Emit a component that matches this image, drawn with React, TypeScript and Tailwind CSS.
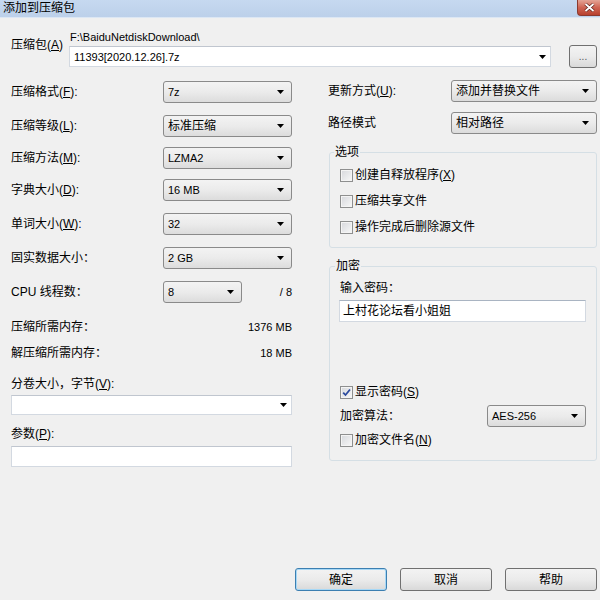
import React from 'react';

const Arrow = () => (
  <svg width="7" height="4" viewBox="0 0 7 4" className="shrink-0">
    <path d="M0 0h7L3.5 4z" fill="#000" />
  </svg>
);

function Select({ value, className = '', latin }: { value: string; className?: string; latin?: boolean }) {
  return (
    <div
      className={`h-[22px] flex items-center justify-between pl-[4px] pr-[7px] rounded-[3px] border border-[#8a8a8a] bg-gradient-to-b from-[#f3f3f3] via-[#ebebeb] to-[#dcdcdc] leading-[14px] ${className}`}
    >
      <span className={latin ? 'text-[11px]' : ''}>{value}</span>
      <Arrow />
    </div>
  );
}

function Key({ k }: { k: string }) {
  return (
    <>
      (<span className="underline underline-offset-1">{k}</span>)
    </>
  );
}

function Check({ checked = false }: { checked?: boolean }) {
  return (
    <div className="w-[13px] h-[13px] shrink-0 border border-[#8e8f8f] bg-gradient-to-br from-[#d6d8dc] to-[#f8f8f8] shadow-[inset_0_0_0_1px_#f4f4f4] flex items-center justify-center">
      {checked && (
        <svg width="9" height="9" viewBox="0 0 9 9">
          <path d="M1.2 4.6 L3.5 7 L8 1.5" fill="none" stroke="#2b4a9e" strokeWidth="1.8" />
        </svg>
      )}
    </div>
  );
}

function CheckRow({ label, checked }: { label: React.ReactNode; checked?: boolean }) {
  return (
    <div className="h-[26px] flex items-center gap-[2px] leading-[14px]">
      <Check checked={checked} />
      <span>{label}</span>
    </div>
  );
}

function Btn({ label, primary }: { label: string; primary?: boolean }) {
  return (
    <div
      className={`w-[92px] h-[23px] flex items-center justify-center rounded-[3px] border bg-gradient-to-b from-[#f3f3f3] via-[#ebebeb] to-[#d9d9d9] ${
        primary ? 'border-[#3c7fb1] shadow-[inset_0_0_0_1px_#a7d8f6]' : 'border-[#707070]'
      }`}
    >
      {label}
    </div>
  );
}

const leftRows: { label: React.ReactNode; value: string; mt: string; latin?: boolean }[] = [
  { label: <>压缩格式<Key k="F" />:</>, value: '7z', mt: 'mt-[1px]', latin: true },
  { label: <>压缩等级<Key k="L" />:</>, value: '标准压缩', mt: 'mt-[12px]' },
  { label: <>压缩方法<Key k="M" />:</>, value: 'LZMA2', mt: 'mt-[10px]', latin: true },
  { label: <>字典大小<Key k="D" />:</>, value: '16 MB', mt: 'mt-[10px]', latin: true },
  { label: <>单词大小<Key k="W" />:</>, value: '32', mt: 'mt-[12px]', latin: true },
  { label: <>固实数据大小：</>, value: '2 GB', mt: 'mt-[12px]', latin: true },
];

export default function App() {
  return (
    <div className="w-[600px] h-[600px] bg-[#f0f0f0] flex flex-col text-[12px] text-black font-['Liberation_Sans','Noto_Sans_CJK_SC',sans-serif] overflow-hidden">
      {/* title bar */}
      <div className="h-[18px] flex items-start bg-gradient-to-b from-[#c6d9f0] to-[#bcd0ea] border-b border-[#dce7f4]">
        <span className="pl-[3px] leading-[17px] text-[12px]">添加到压缩包</span>
        <div className="ml-auto w-[23px] h-[16px] rounded-bl-[4px] border-l border-b border-[#8b3a2f] bg-gradient-to-b from-[#e3a496] via-[#cf6453] to-[#b8412f] flex items-center justify-center">
          <svg width="11" height="9" viewBox="0 0 11 9">
            <path d="M1.5 1 L9.5 8 M9.5 1 L1.5 8" stroke="#5a1e16" strokeWidth="3.2" />
            <path d="M1.5 1 L9.5 8 M9.5 1 L1.5 8" stroke="#fff" strokeWidth="1.8" />
          </svg>
        </div>
      </div>

      {/* archive path */}
      <div className="flex items-start pt-[12px] pl-[11px]">
        <div className="w-[58px] mt-[8px] leading-[14px]">
          压缩包<Key k="A" />
        </div>
        <div className="w-[482px]">
          <div className="leading-[14px] pl-[1px] text-[11px]">F:\BaiduNetdiskDownload\</div>
          <div className="mt-[2px] h-[21px] bg-white border border-[#d3d9e1] border-t-[#c0c6cf] flex items-center justify-between pl-[4px] pr-[4px]">
            <span className="leading-[14px] text-[11px]">11393[2020.12.26].7z</span>
            <Arrow />
          </div>
        </div>
        <div className="ml-[18px] mt-[15px] w-[28px] h-[23px] rounded-[3px] border border-[#707070] bg-gradient-to-b from-[#f3f3f3] via-[#ebebeb] to-[#d9d9d9] flex items-center justify-center text-[#555] text-[10px]">
          ...
        </div>
      </div>

      {/* two columns */}
      <div className="flex mt-[12px]">
        <div className="ml-[11px] w-[281px] flex flex-col">
          {leftRows.map((r, i) => (
            <div key={i} className={`h-[22px] flex items-center justify-between ${r.mt}`}>
              <span className="leading-[14px]">{r.label}</span>
              <Select value={r.value} latin={r.latin} className="w-[129px]" />
            </div>
          ))}
          <div className="h-[22px] flex items-center mt-[12px]">
            <span className="w-[152px] leading-[14px]">CPU 线程数：</span>
            <Select value="8" latin className="w-[79px]" />
            <span className="ml-auto leading-[14px] text-[11px]">/ 8</span>
          </div>
          <div className="flex items-center justify-between h-[14px] mt-[17px]">
            <span className="leading-[14px]">压缩所需内存：</span>
            <span className="leading-[14px] text-[11px]">1376 MB</span>
          </div>
          <div className="flex items-center justify-between h-[14px] mt-[12px]">
            <span className="leading-[14px]">解压缩所需内存：</span>
            <span className="leading-[14px] text-[11px]">18 MB</span>
          </div>
          <div className="leading-[14px] h-[14px] mt-[17px]">
            分卷大小，字节<Key k="V" />:
          </div>
          <div className="mt-[4px] h-[20px] bg-white border border-[#d3d9e1] border-t-[#c0c6cf] flex items-center justify-end pr-[4px]">
            <Arrow />
          </div>
          <div className="leading-[14px] h-[14px] mt-[12px]">
            参数<Key k="P" />:
          </div>
          <div className="mt-[5px] h-[21px] bg-white border border-[#d3d9e1] border-t-[#c0c6cf]" />
        </div>

        <div className="ml-[36px] w-[269px] flex flex-col">
          <div className="h-[22px] flex items-center justify-between">
            <span className="leading-[14px]">
              更新方式<Key k="U" />:
            </span>
            <Select value="添加并替换文件" className="w-[146px]" />
          </div>
          <div className="h-[22px] flex items-center justify-between mt-[10px]">
            <span className="leading-[14px]">路径模式</span>
            <Select value="相对路径" className="w-[146px]" />
          </div>

          <fieldset className="ml-[1px] mt-[11px] border border-[#d5dfe5] rounded-[3px] px-[10px] pt-[3px] pb-[7px]">
            <legend className="ml-[-6px] px-[1px] leading-[14px]">选项</legend>
            <CheckRow label={<>创建自释放程序<Key k="X" /></>} />
            <CheckRow label="压缩共享文件" />
            <CheckRow label="操作完成后删除源文件" />
          </fieldset>

          <fieldset className="ml-[1px] mt-[11px] border border-[#d5dfe5] rounded-[3px] pl-[9px] pr-[10px] pb-[7px]">
            <legend className="ml-[-4px] px-[1px] leading-[14px]">加密</legend>
            <div className="mt-[8px] h-[14px] leading-[14px] pl-[1px]">输入密码：</div>
            <div className="mt-[5px] h-[22px] bg-white border border-[#d3d9e1] border-t-[#a9b4c2] flex items-center pl-[3px]">
              <span className="leading-[14px]">上村花论坛看小姐姐</span>
            </div>
            <div className="mt-[57px] pl-[1px]">
              <CheckRow label={<>显示密码<Key k="S" /></>} checked />
            </div>
            <div className="h-[22px] flex items-center justify-between pl-[1px]">
              <span className="leading-[14px]">加密算法：</span>
              <Select value="AES-256" latin className="w-[99px]" />
            </div>
            <div className="pl-[1px]">
              <CheckRow label={<>加密文件名<Key k="N" /></>} />
            </div>
          </fieldset>
        </div>
      </div>

      {/* buttons */}
      <div className="mt-auto mb-[9px] pr-[3px] flex justify-end gap-[13px]">
        <Btn label="确定" primary />
        <Btn label="取消" />
        <Btn label="帮助" />
      </div>
    </div>
  );
}
